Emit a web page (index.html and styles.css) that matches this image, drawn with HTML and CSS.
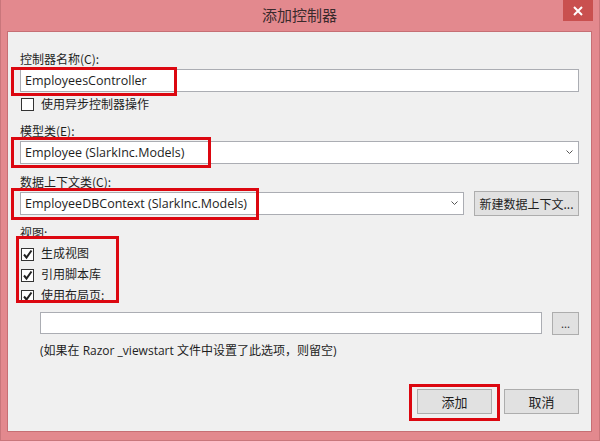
FILE: index.html
```html
<!DOCTYPE html>
<html lang="zh-CN">
<head>
<meta charset="utf-8">
<link rel="stylesheet" href="styles.css">
</head>
<body>
<div class="window">
  <div class="titlebar">
    <span class="title">添加控制器</span>
    <div class="close"><svg width="10" height="10" viewBox="0 0 10 10"><path d="M1 1 L9 9 M9 1 L1 9" stroke="#fff" stroke-width="2"/></svg></div>
  </div>
  <div class="client">
    <div class="label first">控制器名称(C):</div>
    <div class="textbox"><span class="val">EmployeesController</span></div>
    <div class="check-row async"><span class="cb"></span><span>使用异步控制器操作</span></div>

    <div class="label">模型类(E):</div>
    <div class="textbox combo"><span class="val">Employee (SlarkInc.Models)</span><span class="arrow"><svg width="7" height="5" viewBox="0 0 7 5"><path d="M0.5 0.5 L3.5 3.5 L6.5 0.5" fill="none" stroke="#555" stroke-width="1"/></svg></span></div>

    <div class="label">数据上下文类(C):</div>
    <div class="row ctx-row">
      <div class="textbox combo grow"><span class="val">EmployeeDBContext (SlarkInc.Models)</span><span class="arrow"><svg width="7" height="5" viewBox="0 0 7 5"><path d="M0.5 0.5 L3.5 3.5 L6.5 0.5" fill="none" stroke="#555" stroke-width="1"/></svg></span></div>
      <div class="btn newctx">新建数据上下文...</div>
    </div>

    <div class="label">视图:</div>
    <div class="checks">
      <div class="check-row"><span class="cb on"><svg width="11" height="11" viewBox="0 0 11 11"><path d="M2 5.5 L4.5 8.5 L9.5 1.5" fill="none" stroke="#222" stroke-width="2"/></svg></span><span class="txt">生成视图</span></div>
      <div class="check-row"><span class="cb on"><svg width="11" height="11" viewBox="0 0 11 11"><path d="M2 5.5 L4.5 8.5 L9.5 1.5" fill="none" stroke="#222" stroke-width="2"/></svg></span><span class="txt">引用脚本库</span></div>
      <div class="check-row"><span class="cb on"><svg width="11" height="11" viewBox="0 0 11 11"><path d="M2 5.5 L4.5 8.5 L9.5 1.5" fill="none" stroke="#222" stroke-width="2"/></svg></span><span class="txt">使用布局页:</span></div>
    </div>

    <div class="row layout-row">
      <div class="textbox grow"></div>
      <div class="btn dots">...</div>
    </div>
    <div class="note">(如果在 Razor _viewstart 文件中设置了此选项，则留空)</div>

    <div class="footer">
      <div class="btn action">添加</div>
      <div class="btn action">取消</div>
    </div>

    <div class="hl hl-name"></div>
    <div class="hl hl-model"></div>
    <div class="hl hl-ctx"></div>
    <div class="hl hl-views"></div>
    <div class="hl hl-add"></div>
  </div>
</div>
</body>
</html>
```

FILE: styles.css
```css
html, body {
  margin: 0;
  padding: 0;
  width: 600px;
  height: 441px;
  overflow: hidden;
}
body {
  font-family: "Open Sans", "Noto Sans CJK SC", sans-serif;
  font-size: 12px;
  color: #1e1e1e;
}
.window {
  width: 600px;
  height: 441px;
  box-sizing: border-box;
  background: #e3898e;
  display: flex;
  flex-direction: column;
  padding: 0 8px 8px 7px;
  position: relative;
  border: 1px solid #c9767b;
  border-top: none;
}
.titlebar {
  height: 31px;
  flex: none;
  display: flex;
  align-items: center;
  justify-content: center;
  position: relative;
}
.title {
  font-family: "Noto Sans CJK SC", sans-serif;
  font-size: 15px;
  color: #3a2a2c;
  margin-top: -2px;
}
.close {
  position: absolute;
  right: -2px;
  top: 0;
  width: 30px;
  height: 21px;
  background: #c9504f;
  display: flex;
  align-items: center;
  justify-content: center;
}
.client {
  flex: 1;
  min-height: 0;
  background: #f0f0f0;
  border: 1px solid #c66f74;
  margin-left: -1px;
  margin-right: -1px;
  padding: 0 12px 0 12px;
  display: flex;
  flex-direction: column;
  position: relative;
}
.client > * { flex: none; }
.label {
  height: 16px;
  line-height: 16px;
  margin-top: 10px;
  margin-bottom: 2px;
  font-family: "Noto Sans CJK SC", sans-serif;
  overflow: visible;
}
.label.first {
  margin-top: 19px;
}
.textbox {
  height: 23px;
  box-sizing: border-box;
  background: #fff;
  border: 1px solid #abadb3;
  display: flex;
  align-items: center;
  padding-left: 4px;
  font-size: 12.5px;
}
.val { white-space: nowrap; }
.combo { justify-content: space-between; padding-right: 5px; }
.arrow { display: flex; }
.row {
  display: flex;
  align-items: center;
  gap: 10px;
  height: 23px;
}
.grow { flex: 1; }
.btn {
  box-sizing: border-box;
  background: #e1e1e1;
  border: 1px solid #adadad;
  display: flex;
  align-items: center;
  justify-content: center;
  font-family: "Noto Sans CJK SC", sans-serif;
}
.newctx {
  width: 105px;
  height: 25px;
  font-size: 12px;
  flex: none;
}
.check-row {
  display: flex;
  align-items: center;
  gap: 7px;
  height: 21px;
  line-height: 16px;
  font-family: "Noto Sans CJK SC", sans-serif;
  padding-left: 1px;
}
.check-row.async { margin-top: 3px; height: 18px; }
.checks { margin-top: 1px; }
.check-row .txt { padding-bottom: 4px; }
.cb {
  width: 13px;
  height: 13px;
  flex: none;
  box-sizing: border-box;
  border: 1px solid #333;
  background: #fff;
  display: flex;
  align-items: center;
  justify-content: center;
}
.layout-row {
  margin-top: 5px;
  padding-left: 20px;
  height: 22px;
}
.layout-row .textbox { height: 22px; }
.dots {
  width: 27px;
  height: 23px;
  font-size: 11px;
  color: #333;
  flex: none;
}
.note {
  margin-top: 9px;
  padding-left: 20px;
  line-height: 16px;
  font-family: "Open Sans", "Noto Sans CJK SC", sans-serif;
  font-size: 12px;
}
.footer {
  margin-top: auto;
  margin-bottom: 17px;
  display: flex;
  justify-content: flex-end;
  gap: 12px;
}
.action {
  width: 75px;
  height: 25px;
  font-size: 13px;
}
.hl {
  position: absolute;
  border: 3px solid #dc0710;
  box-sizing: border-box;
}
.hl-name { left: 3px; top: 35px; width: 166px; height: 29px; }
.hl-model { left: 3px; top: 105px; width: 200px; height: 31px; }
.hl-ctx { left: 3px; top: 156px; width: 248px; height: 32px; }
.hl-views { left: 8px; top: 204px; width: 103px; height: 67px; }
.hl-add { left: 401px; top: 352px; width: 91px; height: 37px; }
```
